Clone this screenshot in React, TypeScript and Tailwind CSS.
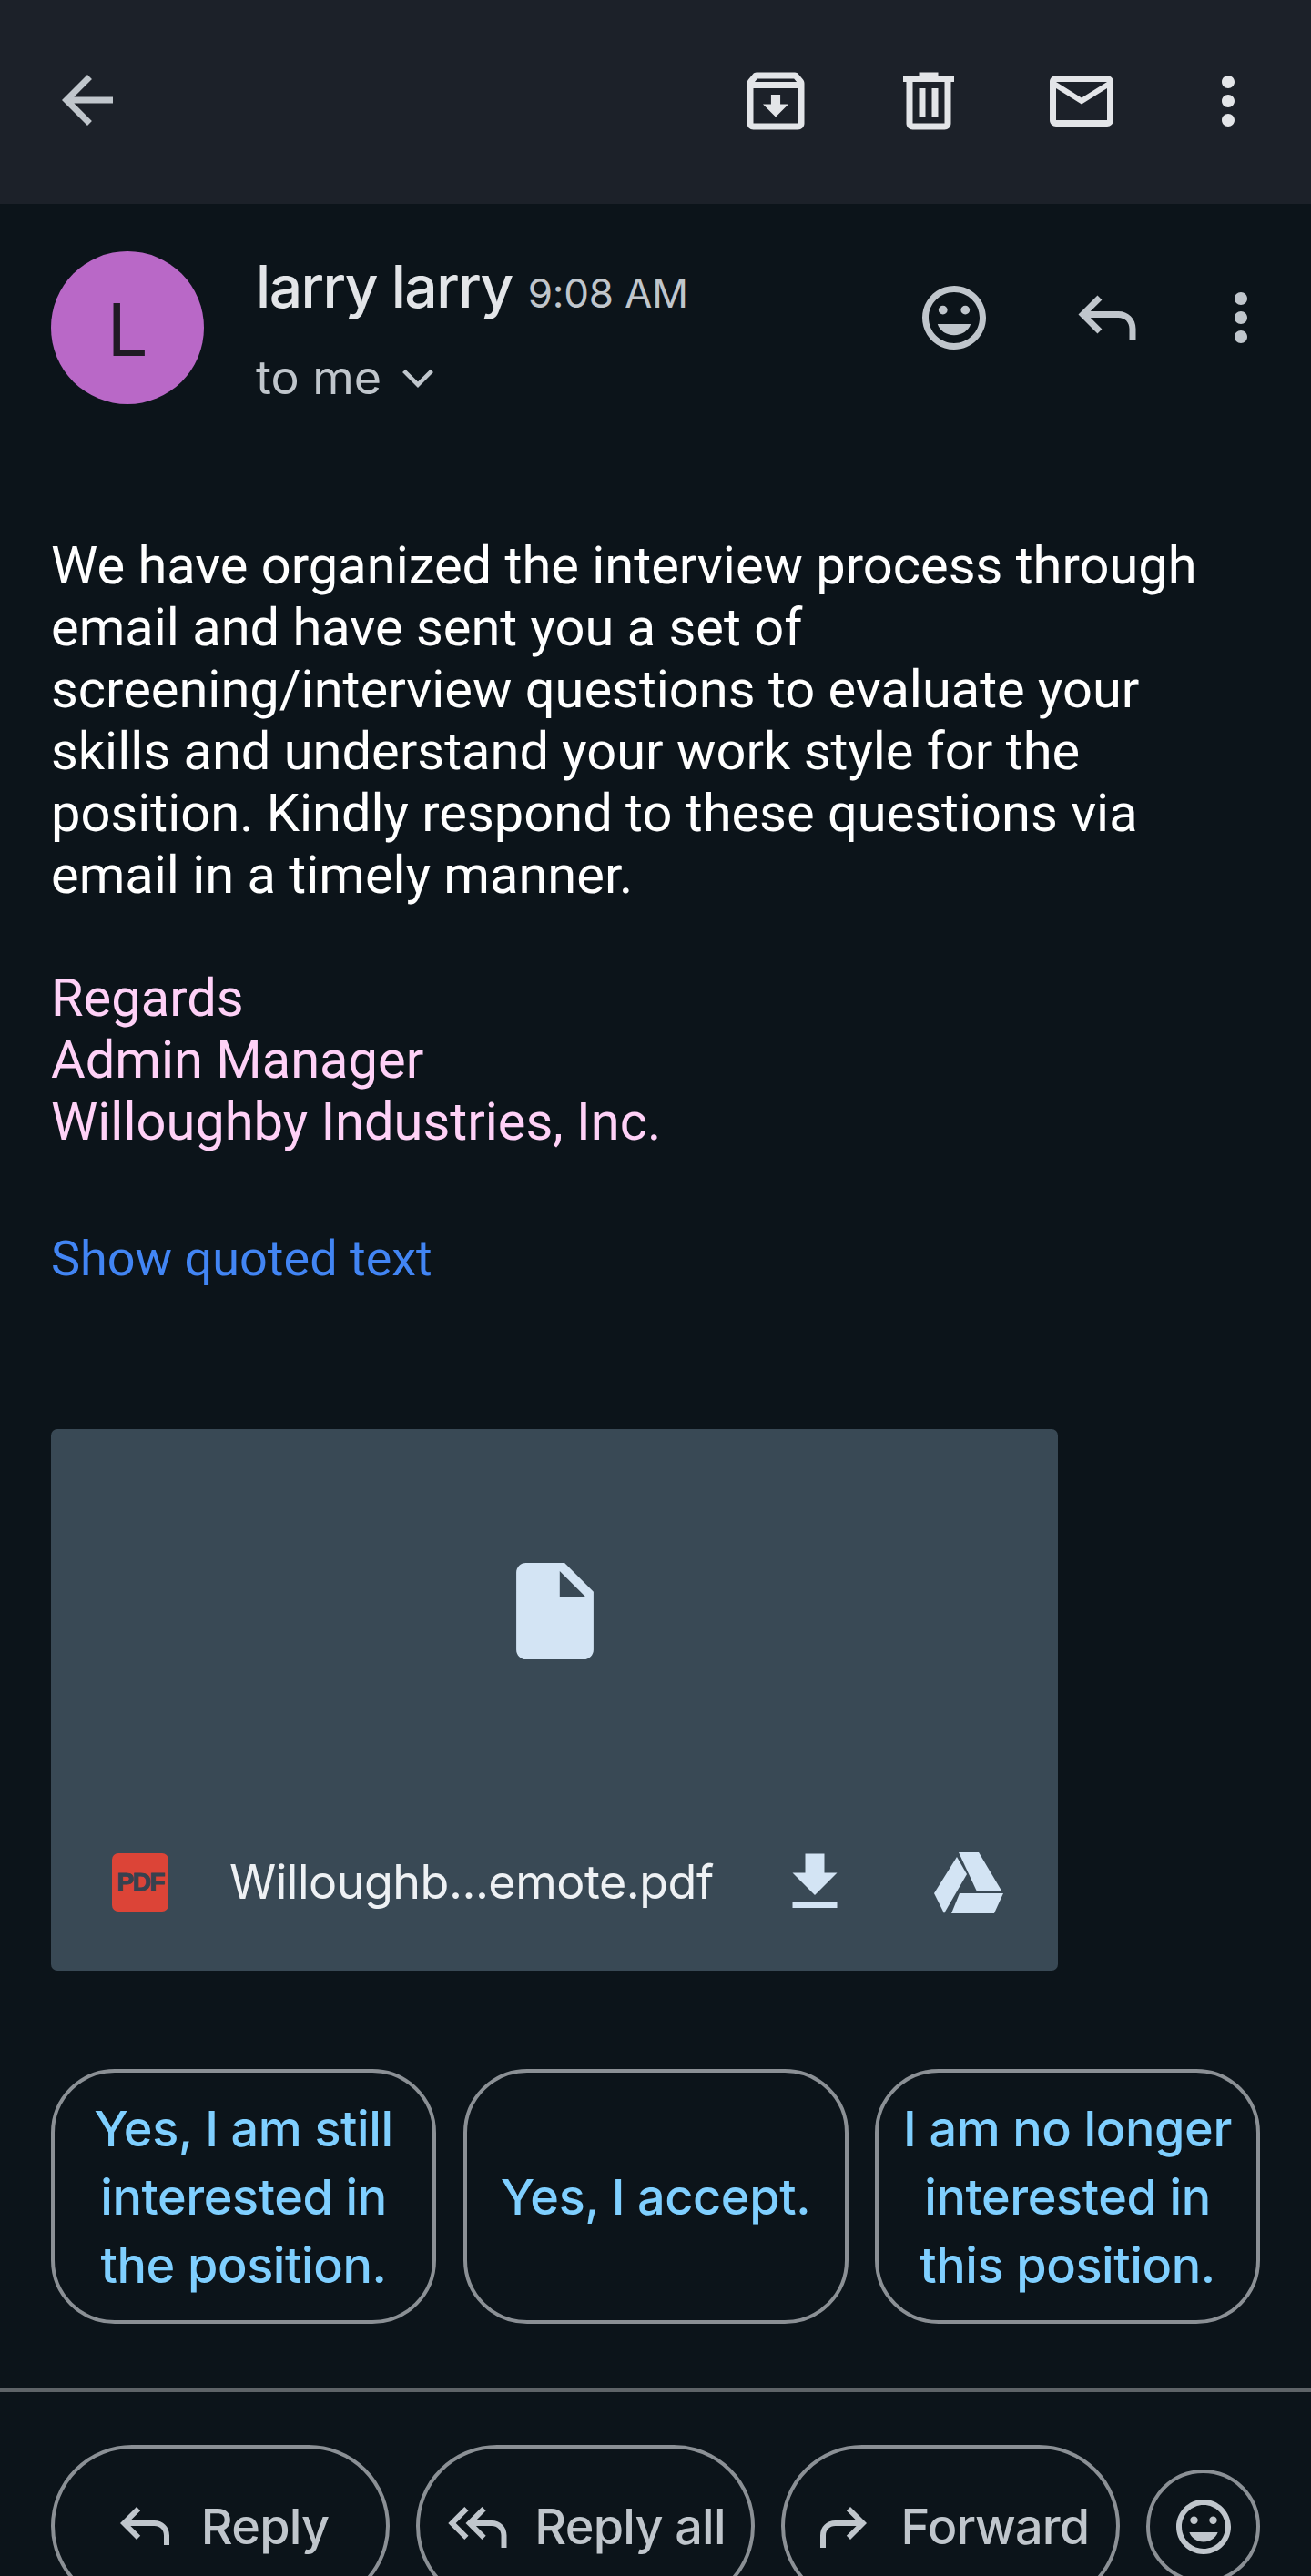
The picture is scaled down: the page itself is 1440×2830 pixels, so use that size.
const Ic = ({ d, c, s = 84 }: { d: string | string[]; c: string; s?: number }) => (
  <svg viewBox="0 0 24 24" width={s} height={s} fill="currentColor" className={`shrink-0 ${c}`}>
    {(Array.isArray(d) ? d : [d]).map((p, i) => <path key={i} d={p} fillRule="evenodd" />)}
  </svg>
);

const P = {
  back: "M20 11H7.83l5.59-5.59L12 4l-8 8 8 8 1.41-1.41L7.83 13H20v-2z",
  archive: "M20.54 5.23l-1.39-1.68C18.88 3.21 18.47 3 18 3H6c-.47 0-.88.21-1.16.55L3.46 5.23C3.17 5.57 3 6.02 3 6.5V19c0 1.1.9 2 2 2h14c1.1 0 2-.9 2-2V6.5c0-.48-.17-.93-.46-1.27zM6.24 5h11.52l.83 1H5.42l.82-1zM5 19V8h14v11H5zm8.45-9h-2.9v3H8l4 4 4-4h-2.55v-3z",
  trash: "M15 4V3H9v1H4v2h1v13c0 1.1.9 2 2 2h10c1.1 0 2-.9 2-2V6h1V4h-5zm2 15H7V6h10v13zM9 8h2v9H9V8zm4 0h2v9h-2V8z",
  mail: "M20 4H4c-1.1 0-2 .9-2 2v12c0 1.1.9 2 2 2h16c1.1 0 2-.9 2-2V6c0-1.1-.9-2-2-2zm0 14H4V8l8 5 8-5v10zm-8-7L4 6h16l-8 5z",
  more: "M12 8c1.1 0 2-.9 2-2s-.9-2-2-2-2 .9-2 2 .9 2 2 2zm0 2c-1.1 0-2 .9-2 2s.9 2 2 2 2-.9 2-2-.9-2-2-2zm0 6c-1.1 0-2 .9-2 2s.9 2 2 2 2-.9 2-2-.9-2-2-2z",
  smile: "M12 2C6.48 2 2 6.48 2 12s4.48 10 10 10 10-4.48 10-10S17.52 2 12 2zm0 18c-4.41 0-8-3.59-8-8s3.59-8 8-8 8 3.59 8 8-3.59 8-8 8zM8.500 11a1.400 1.400 0 1 0 0-2.800 1.400 1.400 0 0 0 0 2.800zm7 0a1.400 1.400 0 1 0 0-2.800 1.400 1.400 0 0 0 0 2.800zM6.800 14c.7 2.100 2.800 3.500 5.200 3.500s4.500-1.400 5.200-3.500H6.800z",
  reply: "M21 19h-2v-3.500c0-2.100-1.400-3.500-3.500-3.500H6.800l3.600 3.600L9 17l-6-6 6-6 1.400 1.400L6.800 10h8.700c3.200 0 5.500 2.300 5.500 5.500V19z",
  replyAll: "M22.500 20h-2v-4.500c0-2.100-1.400-3.500-3.500-3.500h-5.700l3.600 3.600L13.500 17l-6-6 6-6 1.400 1.400L11.300 10H17c3.200 0 5.500 2.300 5.500 5.500V20zM8.500 6.400 7.100 5l-6 6 6 6 1.400-1.400L3.900 11l4.600-4.600z",
  forward: "M3 20h2v-4.500C5 13.400 6.400 12 8.500 12h7.700l-3.600 3.600L14 17l6-6-6-6-1.400 1.400 3.600 3.600H8.500C5.300 10 3 12.300 3 15.500V20z",
  file: "M6 2c-1.100 0-2 .9-2 2v16c0 1.100.9 2 2 2h12c1.100 0 2-.9 2-2V8l-6-6H6zm7 1.700L18.300 9H13V3.700z",
  download: "M19 9h-4V3H9v6H5l7 7 7-7zM5 18v2h14v-2H5z",
};

const Chip = ({ children }: { children: React.ReactNode }) => (
  <div className="flex h-[280px] w-[423px] shrink-0 items-center justify-center rounded-[70px] border-[4px] border-[#8b9095] text-center text-[54px] font-medium leading-[75px] tracking-[-0.4px] text-[#7fcfff] font-['Inter',sans-serif]">
    {children}
  </div>
);

const Action = ({ d, label }: { d: string; label: string }) => (
  <div className="flex h-[178px] w-[372px] shrink-0 items-center justify-center gap-[26px] rounded-[89px] border-[4px] border-[#8b9095] text-[54px] font-medium text-[#c0c6cc] font-['Inter',sans-serif] tracking-[-0.8px]">
    <Ic d={d} c="text-[#c0c6cc]" s={72} />
    <span>{label}</span>
  </div>
);

export default function App() {
  return (
    <div className="h-[2830px] w-[1440px] overflow-hidden bg-[#0c141a] font-['Roboto',sans-serif]">
      <header className="flex h-[224px] items-center bg-[#1c2129] pb-[4px] pl-[54px]">
        <Ic d={P.back} c="text-[#c0c6cc]" />
        <div className="ml-[672px] mt-[2px] flex gap-[84px] text-[#e3e5e8]">
          <Ic d={P.archive} c="" />
          <Ic d={P.trash} c="" />
          <Ic d={P.mail} c="" />
        </div>
        <div className="ml-[77px] mt-[2px] text-[#e3e5e8]"><Ic d={P.more} c="" /></div>
      </header>

      <section className="relative flex pl-[56px] pt-[52px]">
        <div className="flex h-[168px] w-[168px] shrink-0 items-center justify-center rounded-full bg-[#b968c7] pt-[4px] text-[80px] leading-none text-[#201a24] font-['Inter',sans-serif]">L</div>
        <div className="ml-[57px] w-[700px]">
          <div className="mt-[5px] flex h-[68px] items-baseline gap-[17px] font-['Inter',sans-serif]">
            <span className="text-[64px] font-medium leading-[68px] tracking-[-1.5px] text-[#e3e5e8]">larry larry</span>
            <span className="text-[44px] leading-[68px] tracking-[-0.2px] text-[#c0c6cc]">9:08 AM</span>
          </div>
          <div className="mt-[34px] flex h-[64px] items-center font-['Inter',sans-serif] text-[52px] text-[#c0c6cc]">
            <span>to me</span>
            <svg viewBox="0 0 24 24" width="46" height="46" fill="none" stroke="currentColor" strokeWidth="2.400" className="ml-[17px]"><path d="M4 8l8 8 8-8" /></svg>
          </div>
        </div>
        <div className="ml-[25px] mt-[31px] flex text-[#c0c6cc]">
          <Ic d={P.smile} c="" />
          <Ic d={P.reply} c="ml-[84px]" />
          <Ic d={P.more} c="ml-[63px]" />
        </div>
      </section>

      <section className="px-[56px] pt-[140px] text-[57.800px] leading-[68px]">
        <p className="text-[#ffffff] whitespace-pre-line">{`We have organized the interview process through
email and have sent you a set of
screening/interview questions to evaluate your
skills and understand your work style for the
position. Kindly respond to these questions via
email in a timely manner.`}</p>
        <p className="mt-[67px] whitespace-pre-line text-[#ffd1f7]">{`Regards
Admin Manager
Willoughby Industries, Inc.`}</p>
        <p className="mt-[83px] text-[54px] text-[#4285f4]">Show quoted text</p>
      </section>

      <section className="mx-[56px] mt-[153px] h-[595px] w-[1106px] rounded-[7px] bg-[#394955] text-[#d3e4f4]">
        <div className="flex justify-center pt-[147px]">
          <svg viewBox="4 2 16 20" width="85" height="106" fill="currentColor"><path d={P.file} fillRule="evenodd" /></svg>
        </div>
        <div className="mt-[210px] flex h-[70px] items-center pl-[67px]">
          <div className="flex h-[64px] w-[62px] shrink-0 items-center justify-center rounded-[7px] bg-[#dc4437] text-[28px] font-bold tracking-[-1.500px] text-[#37414f] [-webkit-text-stroke:1px_#37414f] font-['Liberation_Sans',sans-serif]">PDF</div>
          <span className="ml-[67px] w-[600px] shrink-0 text-[52px] tracking-[-0.500px] text-[#eef1f4] font-['Inter',sans-serif]">Willoughb...emote.pdf</span>
          <Ic d={P.download} c="ml-[1px]" />
          <svg viewBox="0 0 76 67" width="76" height="67" fill="currentColor" className="ml-[89px] shrink-0">
            <path d="M27 0H49L74 42H46.500L27 0z" />
            <path d="M25 5 36 24 11 67 0 45 25 5z" />
            <path d="M28 45H76L66 67H19L28 45z" />
          </svg>
        </div>
      </section>

      <section className="mt-[108px] flex gap-[29.500px] px-[56px]">
        <Chip>Yes, I am still<br />interested in<br />the position.</Chip>
        <Chip>Yes, I accept.</Chip>
        <Chip>I am no longer<br />interested in<br />this position.</Chip>
      </section>

      <div className="mt-[71px] h-[4px] bg-[#5f6468]" />

      <section className="mt-[58px] flex items-start gap-[29px] pl-[56px]">
        <Action d={P.reply} label="Reply" />
        <Action d={P.replyAll} label="Reply all" />
        <Action d={P.forward} label="Forward" />
        <div className="mt-[27px] flex h-[125px] w-[125px] shrink-0 items-center justify-center rounded-full border-[4px] border-[#8b9095] text-[#c0c6cc]">
          <Ic d={P.smile} c="" s={72} />
        </div>
      </section>
    </div>
  );
}
